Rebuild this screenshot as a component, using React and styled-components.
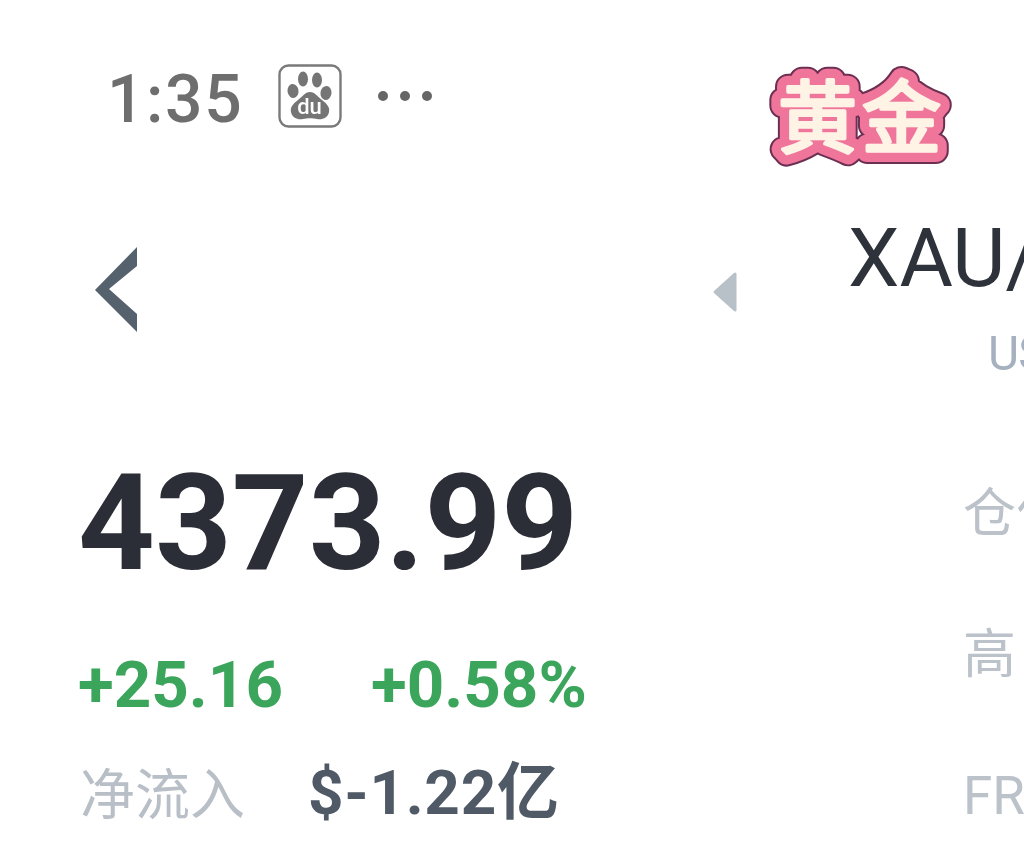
import React from 'react';
import styled, { createGlobalStyle } from 'styled-components';

const GlobalStyle = createGlobalStyle`
  html, body {
    margin: 0;
    padding: 0;
    background: #ffffff;
    font-family: Roboto, "Noto Sans CJK SC", sans-serif;
  }
`;

// the reference is an upscaled phone capture, so everything is a little soft
const Page = styled.div`
  position: relative;
  width: 1024px;
  height: 856px;
  overflow: hidden;
  background: #ffffff;
  filter: blur(0.6px);
`;

const StatusBar = styled.div`
  display: flex;
  align-items: center;
  height: 192px;
  padding-left: 107px;
`;

const Clock = styled.span`
  font-size: 66px;
  font-weight: 500;
  line-height: 1;
  color: #6e6e6e;
  letter-spacing: 1.6px;
  margin-top: 8px;
`;

const BaiduBadge = styled.svg`
  flex: none;
  width: 64px;
  height: 64px;
  margin-left: 35px;
`;

const MoreDots = styled.svg`
  flex: none;
  width: 60px;
  height: 12px;
  margin-left: 34px;
`;

const Sticker = styled.svg`
  position: absolute;
  left: 750px;
  top: 40px;
  width: 220px;
  height: 150px;
`;

const StickerText = styled.text`
  font-family: "Noto Sans CJK SC", sans-serif;
  font-size: 79px;
  font-weight: 400;
  letter-spacing: 5px;
  stroke-linejoin: round;
  stroke-linecap: round;
`;

const Header = styled.div`
  display: flex;
  align-items: flex-start;
  height: 198px;
`;

const BackButton = styled.svg`
  flex: none;
  width: 44px;
  height: 88px;
  margin: 54px 0 0 94px;
`;

const PrevCaret = styled.svg`
  flex: none;
  width: 26px;
  height: 42px;
  margin: 79px 0 0 574px;
`;

const TitleBlock = styled.div`
  display: flex;
  flex-direction: column;
  flex: none;
  margin-left: 110px;
  white-space: nowrap;
`;

const Symbol = styled.div`
  font-size: 82px;
  line-height: 96px;
  margin-top: 18px;
  color: #2e323a;
`;

const Market = styled.div`
  font-size: 48px;
  line-height: 60px;
  margin: 18px 0 0 140px;
  letter-spacing: -1px;
  color: #a6b1c0;
`;

const Body = styled.div`
  display: flex;
  align-items: flex-start;
`;

const Quote = styled.div`
  display: flex;
  flex-direction: column;
  width: 963px;
  flex: none;
  padding-left: 78px;
  box-sizing: border-box;
`;

const Price = styled.div`
  font-size: 134px;
  font-weight: 700;
  line-height: 150px;
  margin-top: 59px;
  color: #2b2e37;
`;

const ChangeRow = styled.div`
  display: flex;
  gap: 88px;
  margin-top: 48px;
  font-size: 65.5px;
  font-weight: 700;
  line-height: 76px;
  color: #3ba55c;
`;

const FlowRow = styled.div`
  display: flex;
  align-items: baseline;
  margin-top: 32px;
  line-height: 76px;
`;

const FlowLabel = styled.span`
  font-size: 55px;
  color: #b9bfc7;
  margin-left: 2px;
`;

const FlowValue = styled.span`
  font-size: 62px;
  font-weight: 700;
  letter-spacing: 0.7px;
  color: #505a67;
  margin-left: 63px;
`;

const StatList = styled.div`
  display: flex;
  flex-direction: column;
  gap: 73px;
  margin-top: 90px;
  white-space: nowrap;
`;

const StatLabel = styled.div`
  font-size: 53px;
  line-height: 68px;
  color: #bcc2ca;
`;

export default function App() {
  return (
    <Page>
      <GlobalStyle />
      <StatusBar>
        <Clock>1:35</Clock>
        <BaiduBadge viewBox="0 0 64 64">
          <rect x="1.5" y="1.5" width="61" height="61" rx="9" fill="#fff" stroke="#7a7a7a" strokeWidth="2.4" />
          <g fill="#757575">
            <ellipse cx="15" cy="27" rx="5.5" ry="7" transform="rotate(-8 15 27)" />
            <ellipse cx="25" cy="15" rx="5" ry="7.5" />
            <ellipse cx="39" cy="16" rx="5" ry="7.5" />
            <ellipse cx="48" cy="29" rx="5.5" ry="7" transform="rotate(8 48 29)" />
            <path d="M32 28c5 0 8 5 12 8 5 4 8 7 7 12-1 6-7 8-12 7-4-1-10-1-14 0-5 1-11-1-12-7-1-5 2-8 7-12 4-3 7-8 12-8z" />
          </g>
          <text x="31.5" y="50" textAnchor="middle" fontFamily="Roboto, sans-serif" fontSize="22" fontWeight="500" fill="#ffffff">du</text>
        </BaiduBadge>
        <MoreDots viewBox="0 0 60 12">
          <circle cx="7" cy="6" r="5" fill="#666" />
          <circle cx="29" cy="6" r="5" fill="#666" />
          <circle cx="51" cy="6" r="5" fill="#666" />
        </MoreDots>
      </StatusBar>

      <Sticker viewBox="0 0 220 150">
        <StickerText x="28" y="107" fill="#6b2f52" stroke="#6b2f52" strokeWidth="26" aria-hidden="true">黄金</StickerText>
        <StickerText x="28" y="107" fill="#f0759a" stroke="#f0759a" strokeWidth="22" aria-hidden="true">黄金</StickerText>
        <StickerText x="28" y="107" fill="#fff3e6" stroke="#fff3e6" strokeWidth="3.5">黄金</StickerText>
      </Sticker>

      <Header>
        <BackButton viewBox="0 0 44 88">
          <polygon points="43,1 43,20 15,43 43,68 43,86 1,44" fill="#56616e" />
        </BackButton>
        <PrevCaret viewBox="0 0 26 42">
          <path d="M23 3v36L3 21z" fill="#b8c0c8" stroke="#b8c0c8" strokeWidth="3" strokeLinejoin="round" />
        </PrevCaret>
        <TitleBlock>
          <Symbol>XAU/USD</Symbol>
          <Market>USD</Market>
        </TitleBlock>
      </Header>

      <Body>
        <Quote>
          <Price>4373.99</Price>
          <ChangeRow>
            <span>+25.16</span>
            <span>+0.58%</span>
          </ChangeRow>
          <FlowRow>
            <FlowLabel>净流入</FlowLabel>
            <FlowValue>$-1.22亿</FlowValue>
          </FlowRow>
        </Quote>
        <StatList>
          <StatLabel>仓位</StatLabel>
          <StatLabel>高</StatLabel>
          <StatLabel>FR</StatLabel>
        </StatList>
      </Body>
    </Page>
  );
}
